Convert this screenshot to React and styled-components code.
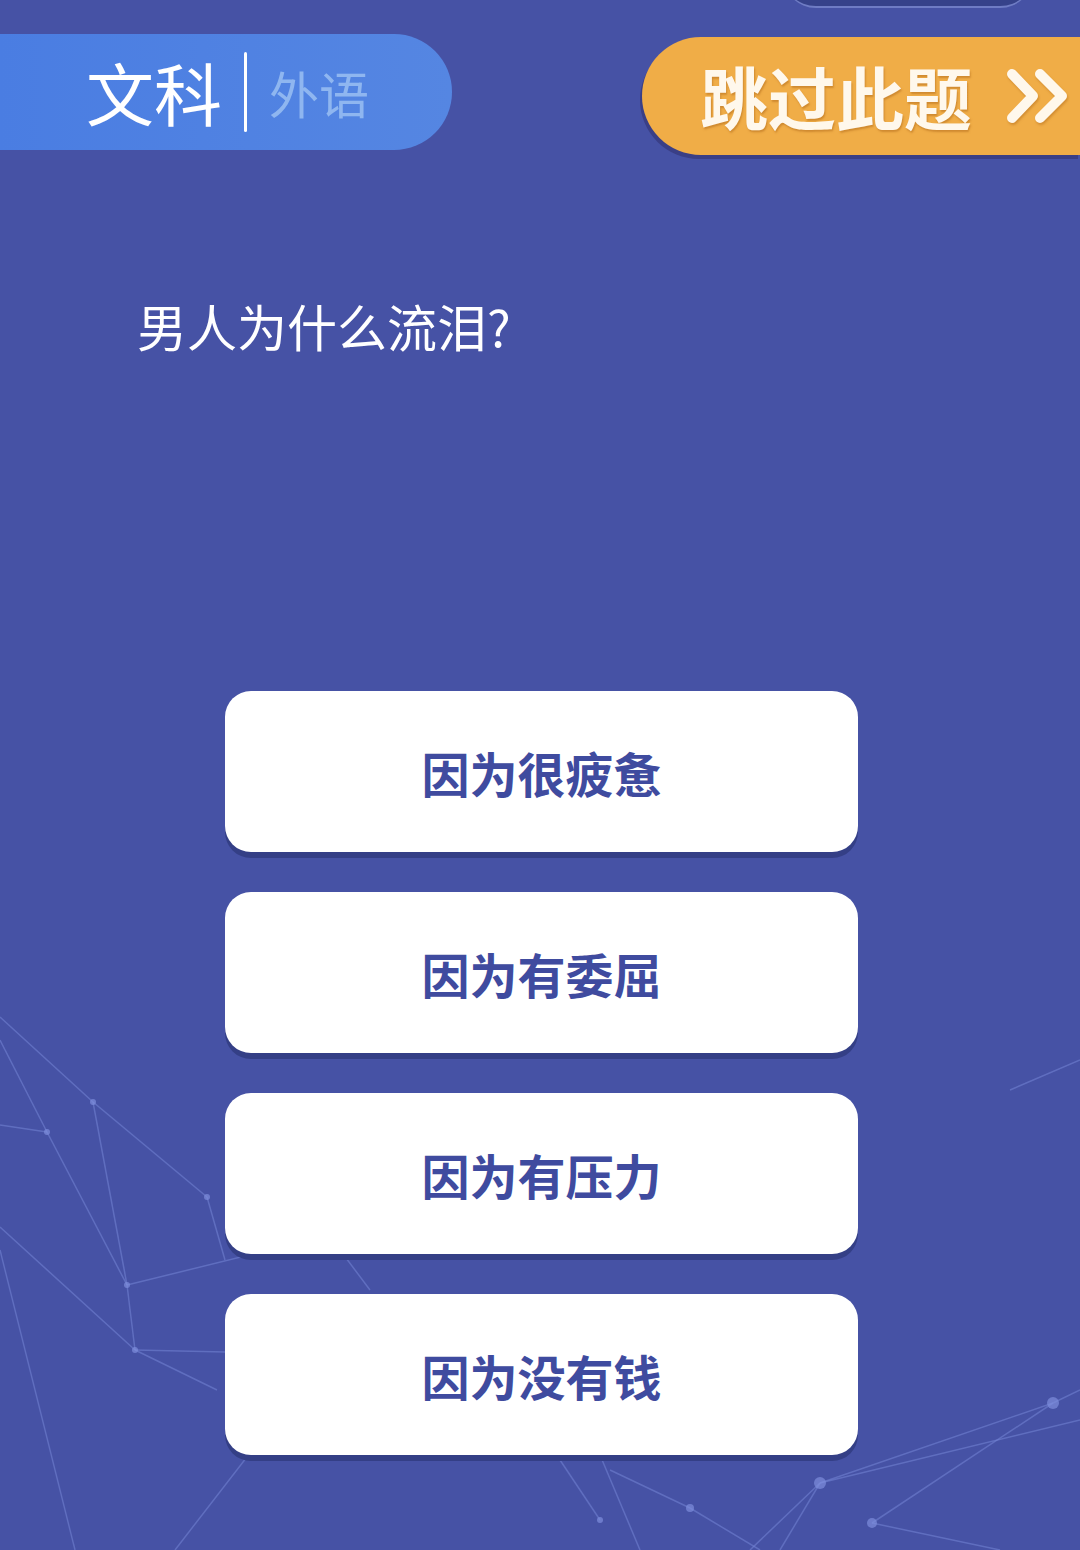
import React from 'react';
import styled, { createGlobalStyle } from 'styled-components';

const GlobalStyle = createGlobalStyle`
  html, body {
    margin: 0;
    padding: 0;
    background: #4652a5;
  }
  body {
    font-family: "Noto Sans CJK SC", "Noto Sans", sans-serif;
  }
`

const Page = styled.div`
  position: relative;
  width: 1080px;
  height: 1550px;
  overflow: hidden;
  background: #4652a5;
  display: flex;
  flex-direction: column;
`

const Network = styled.svg`
  position: absolute;
  left: 0;
  top: 0;
  width: 1080px;
  height: 1550px;
  pointer-events: none;
`

const TopTab = styled.div`
  position: absolute;
  left: 783px;
  top: -60px;
  width: 250px;
  height: 66px;
  border-radius: 33px;
  background: #36428a;
  border-bottom: 2px solid #6f7cc4;
`

const Header = styled.div`
  position: relative;
  display: flex;
  justify-content: space-between;
  align-items: flex-start;
  padding-top: 34px;
`

const SubjectPill = styled.div`
  display: flex;
  align-items: center;
  width: 452px;
  height: 116px;
  box-sizing: border-box;
  padding-left: 86px;
  border-radius: 0 58px 58px 0;
  background: linear-gradient(90deg, #4a7de2 0%, #5586e2 100%);
`

const Subject = styled.span`
  font-size: ${p => p.$size}px;
  color: ${p => p.$color};
  line-height: 1;
`

const Divider = styled.span`
  width: 3px;
  height: 80px;
  margin: 0 22px 0 22px;
  background: #ffffff;
  border-radius: 2px;
`

const SkipButton = styled.div`
  display: flex;
  align-items: center;
  margin-top: 3px;
  width: 438px;
  height: 118px;
  box-sizing: border-box;
  padding-left: 58px;
  border-radius: 59px 0 0 59px;
  background: #f0ad47;
  box-shadow: -2px 4px 0 #3a3f86;
`

const SkipText = styled.span`
  font-size: 68px;
  font-weight: 700;
  color: #fff8ec;
  line-height: 1;
  text-shadow: 1px 2px 2px rgba(180, 110, 30, 0.55);
`

const Chevrons = styled.svg`
  margin-left: 34px;
  width: 64px;
  height: 56px;
  filter: drop-shadow(1px 2px 1px rgba(180, 110, 30, 0.5));
`

const Question = styled.div`
  position: relative;
  margin-top: 140px;
  padding-left: 137px;
  font-size: 50px;
  color: #ffffff;
  line-height: 60px;
`

const Options = styled.div`
  position: relative;
  margin-top: 336px;
  display: flex;
  flex-direction: column;
  align-items: center;
  gap: 40px;
`

const Option = styled.div`
  width: 633px;
  height: 161px;
  display: flex;
  align-items: center;
  justify-content: center;
  background: #ffffff;
  border-radius: 26px;
  box-shadow: 0 6px 0 #343f86;
  font-size: 48px;
  font-weight: 700;
  color: #3f4b9f;
  margin-left: 3px;
`

const answers = ['因为很疲惫', '因为有委屈', '因为有压力', '因为没有钱']

const lines = [
  [0, 1017, 93, 1102], [93, 1102, 207, 1197], [93, 1102, 127, 1285],
  [0, 1040, 47, 1132], [47, 1132, 127, 1285], [0, 1125, 47, 1132],
  [127, 1285, 135, 1350], [127, 1285, 290, 1245], [0, 1227, 135, 1350],
  [135, 1350, 217, 1390], [135, 1350, 225, 1352], [0, 1250, 75, 1550],
  [175, 1550, 260, 1440], [207, 1197, 225, 1260], [340, 1250, 370, 1290],
  [610, 1470, 690, 1508], [690, 1508, 760, 1550], [820, 1483, 1053, 1403],
  [820, 1483, 1080, 1420], [1053, 1403, 872, 1523], [820, 1483, 750, 1550],
  [872, 1523, 1000, 1550], [820, 1483, 780, 1550], [1053, 1403, 1080, 1390],
  [600, 1455, 640, 1550], [560, 1460, 600, 1520], [1010, 1090, 1080, 1060],
]

const nodes = [
  [93, 1102, 3], [47, 1132, 3], [127, 1285, 3], [135, 1350, 3], [207, 1197, 3],
  [820, 1483, 6], [872, 1523, 5], [1053, 1403, 6], [690, 1508, 4], [600, 1520, 3],
]

const App = () => {
  return (
    <Page>
      <GlobalStyle />
      <Network viewBox="0 0 1080 1550">
        {lines.map(([x1, y1, x2, y2], i) => (
          <line key={i} x1={x1} y1={y1} x2={x2} y2={y2} stroke="#7585d6" strokeOpacity="0.55" strokeWidth="1.5" />
        ))}
        {nodes.map(([cx, cy, r], i) => (
          <circle key={i} cx={cx} cy={cy} r={r} fill="#7d8ddb" fillOpacity="0.7" />
        ))}
      </Network>
      <TopTab />
      <Header>
        <SubjectPill>
          <Subject $size={68} $color="#ffffff">文科</Subject>
          <Divider />
          <Subject $size={50} $color="#8fb6f0">外语</Subject>
        </SubjectPill>
        <SkipButton>
          <SkipText>跳过此题</SkipText>
          <Chevrons viewBox="0 0 64 56">
            <path d="M6 6 L27 28 L6 50" fill="none" stroke="#fff8ec" strokeWidth="10" strokeLinecap="round" strokeLinejoin="round" />
            <path d="M34 6 L56 28 L34 50" fill="none" stroke="#fff8ec" strokeWidth="10" strokeLinecap="round" strokeLinejoin="round" />
          </Chevrons>
        </SkipButton>
      </Header>
      <Question>男人为什么流泪?</Question>
      <Options>
        {answers.map(a => (
          <Option key={a}>{a}</Option>
        ))}
      </Options>
    </Page>
  )
}

export default App
